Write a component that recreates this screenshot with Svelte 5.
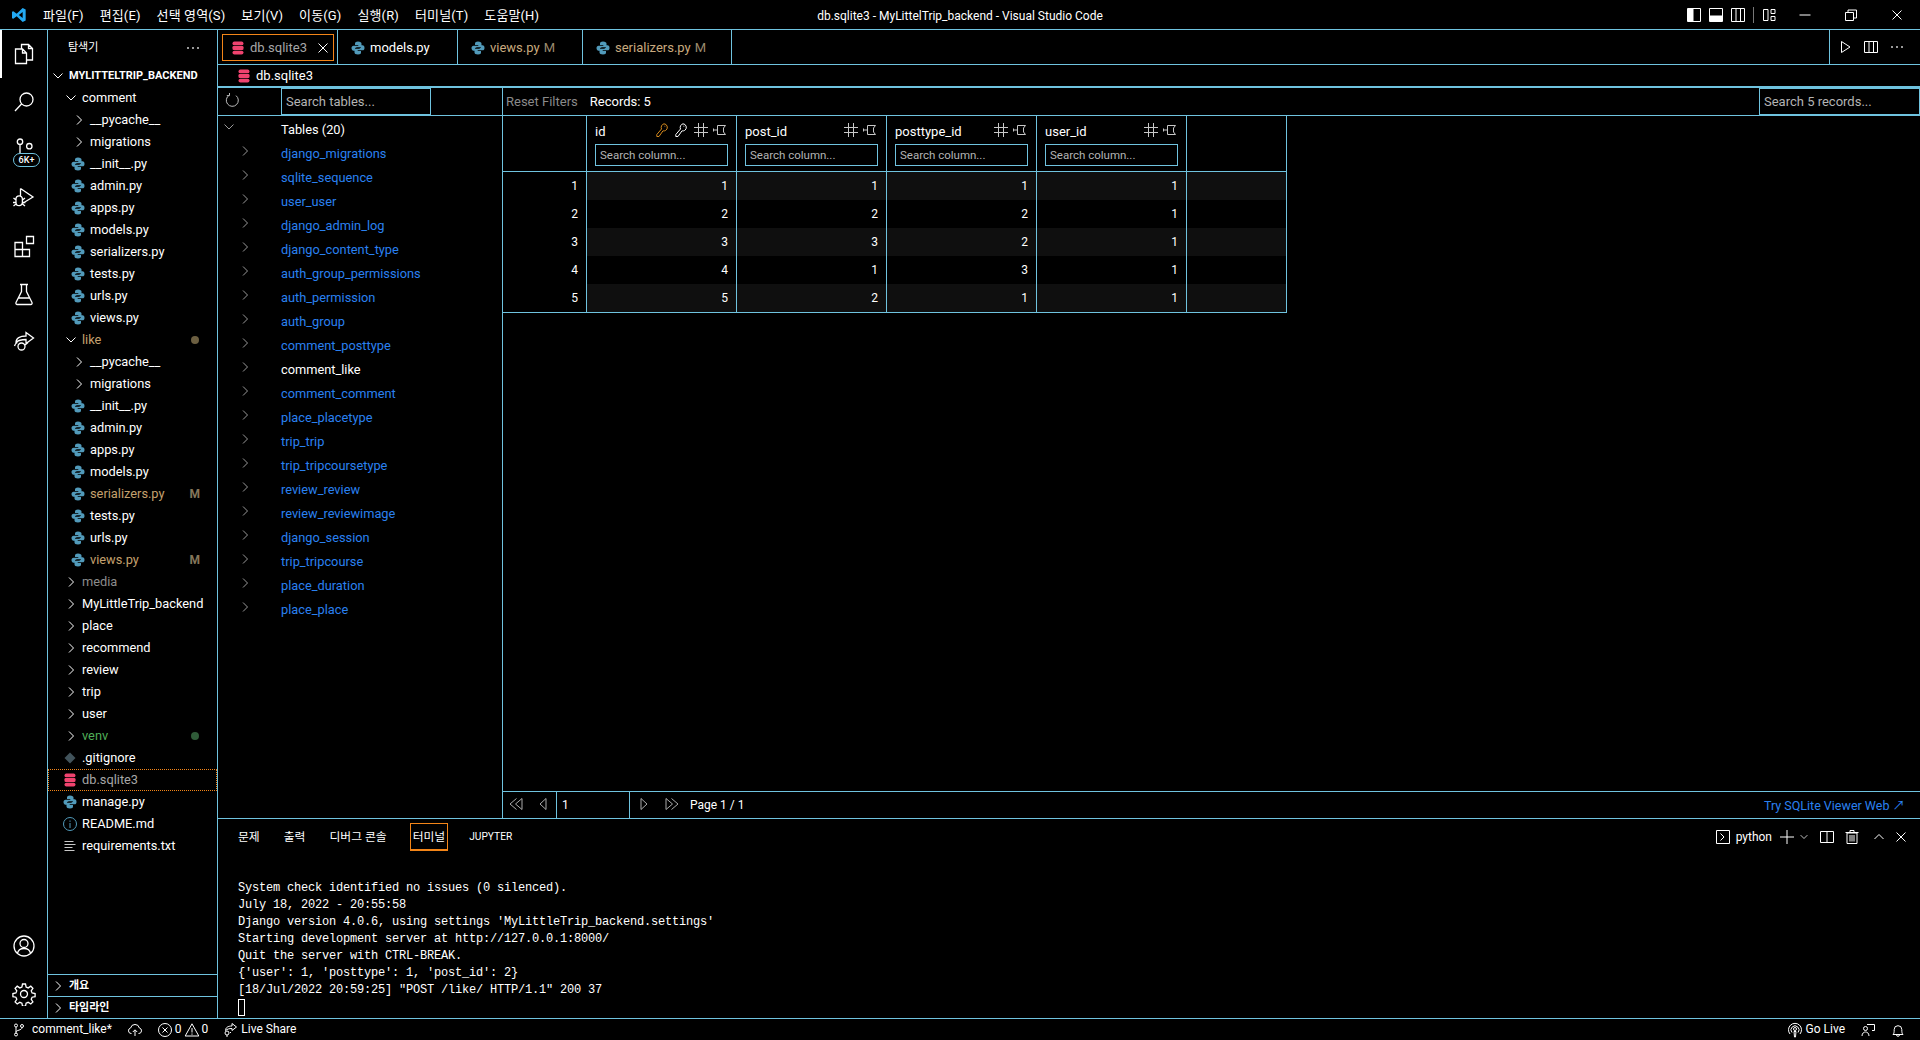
<script>
  const ICONS = {
    chevR: { s: ['M6 3.500 10.500 8 6 12.500'] },
    chevD: { s: ['M3.500 5.500 8 10 12.500 5.500'] },
    chevU: { s: ['M3.500 10 8 5.500 12.500 10'] },
    close: { s: ['M3.500 3.500l9 9M12.500 3.500l-9 9'] },
    dots: { f: ['M2.200 7.200h1.600v1.600H2.200zM7.200 7.200h1.600v1.600H7.200zM12.200 7.200h1.600v1.600h-1.600z'] },
    play: { s: ['M4.500 2.500 13 8l-8.500 5.500z'] },
    split: { s: ['M1.500 2.500h13v11h-13zM6 2.500v11M10.500 2.500v11'] },
    split2: { s: ['M1.500 2.500h13v11h-13zM8 2.500v11'] },
    layL: { s: ['M1.500 1.500h13v13h-13z'], f: ['M2 2h5.500v12H2z'] },
    layB: { s: ['M1.500 1.500h13v13h-13z'], f: ['M2 8.500h12V14H2z'] },
    layR: { s: ['M1.500 1.500h13v13h-13zM6 1.500v13M10.500 1.500v13'] },
    layC: { s: ['M2.500 2.500h4.500v11H2.500zM10 2.500h4v4h-4zM10 9.500h4v4h-4z'] },
    min: { s: ['M2.500 8h11'] },
    restore: { s: ['M2.500 5.500h8v8h-8zM5 5.500V3h8.500v8H10.500'] },
    refresh: { s: ['M5.200 3.200A6 6 0 1 0 12 3.600M5.500 1v2.600H2.800'] },
    first: { s: ['M14 2.500 7.500 8l6.500 5.500zM8.500 2.500 2 8l6.500 5.500'] },
    prev: { s: ['M11 2.500 5 8l6 5.500z'] },
    next: { s: ['M5 2.500 11 8l-6 5.500z'] },
    last: { s: ['M2 2.500 8.500 8 2 13.500zM7.500 2.500 14 8l-6.500 5.500'] },
    key: { s: ['M10 1.800a3.600 3.600 0 0 1 2.200 6.200c-1 1-2.300 1-3.200.8L5 14.500H2.800v-2L7.500 7A3.800 3.800 0 0 1 10 1.800zM10.500 4.200h.8'] },
    hash: { s: ['M5.500 1v14M10.500 1v14M1 5.500h14M1 10.500h14'] },
    pin: { s: ['M5.500 3.500h8l-2 2.500v4l2 2.500h-8zM5.500 8h-4M1.500 6.500v3'] },
    term: { s: ['M1.500 1.500h13v13h-13zM5.500 4.500 9 8l-3.500 3.500'] },
    plus: { s: ['M8 1v14M1 8h14'] },
    trash: { s: ['M3 4h10v10.500H3zM1.500 3.500h13M6 3.500V1.500h4v2M6 6v6.500M8 6v6.500M10 6v6.500'] },
    branch: { s: ['M4 5v7M4 10c0-2 6-1.500 6-4.500M5.500 3.500a1.500 1.500 0 1 1-3 0 1.500 1.500 0 0 1 3 0zM5.500 12.500a1.500 1.500 0 1 1-3 0 1.500 1.500 0 0 1 3 0zM11.500 4a1.500 1.500 0 1 1-3 0 1.500 1.500 0 0 1 3 0z'] },
    sync: { s: ['M4.500 11.500H4a2.800 2.800 0 0 1-.4-5.500 4.500 4.500 0 0 1 8.800 0 2.800 2.800 0 0 1-.4 5.500h-.5M8 14V8M5.800 10 8 7.800 10.200 10'] },
    err: { s: ['M14.500 8a6.500 6.500 0 1 1-13 0 6.500 6.500 0 0 1 13 0zM5.500 5.500l5 5M10.500 5.500l-5 5'] },
    warn: { s: ['M8 1.800 14.800 14H1.200zM8 6v4.500M8 11.500v1.200'] },
    share: { s: ['M3.500 8.500C3.500 5.500 6 4 10 4V1.500L14.500 5 10 8.500V6.500C7 6.500 5.500 7 3.500 8.500zM7 11a2 2 0 1 1-4 0 2 2 0 0 1 4 0zM5 13v2M9 10l-1 1'] },
    golive: { s: ['M11 10.500a4 4 0 1 0-6 0M13 12a6.500 6.500 0 1 0-10 0M9.500 7a1.500 1.500 0 1 1-3 0 1.500 1.500 0 0 1 3 0zM7 9.500h2L8.500 15h-1z'] },
    feedback: { s: ['M7 2.500h7.500v6H12M7.500 6.500a2 2 0 1 1-4 0 2 2 0 0 1 4 0zM2 14c0-3 2-4 3.500-4s3.500 1 3.500 4'] },
    bell: { s: ['M3 12.500c1-1 1.200-2 1.200-5a3.800 3.800 0 0 1 7.600 0c0 3 .2 4 1.200 5zM6.500 12.800a1.500 1.500 0 0 0 3 0'] },
    lines: { s: ['M2.500 3.500h9M2.500 6.500h11M2.500 9.500h8M2.500 12.500h10'] },
    info: { s: ['M14.500 8a6.500 6.500 0 1 1-13 0 6.500 6.500 0 0 1 13 0zM8 7v5M8 4.500v1.300'] },
    files: { s: ['M9.500 6.500V2.500h7l4 4v11.500h-5.500M16.500 2.500v4h4M3.500 7h7l4 4v10.500h-11zM10.500 7v4h4'] },
    search: { s: ['M21 9.500a6.500 6.500 0 1 1-13 0 6.500 6.500 0 0 1 13 0zM9.500 14 3 21'] },
    scm: { s: ['M10.700 3.700a2.700 2.700 0 1 1-5.400 0 2.700 2.700 0 0 1 5.400 0zM20 8.200a2.700 2.700 0 1 1-5.400 0 2.700 2.700 0 0 1 5.400 0zM8 6.400V16'] },
    run: { s: ['M8.500 2.500 21 11 9.500 18M8.500 2.500V10M4 13a3.200 3.200 0 0 1 6.400 0v3.500a3.200 3.200 0 0 1-6.400 0zM1.500 12l2.500 2M13 12l-2.500 2M1.500 20l2.500-2M13 20l-2.500-2M1 16.500h3M10.500 16.500h3'] },
    ext: { s: ['M3 8.500h7.500v14H3zM3 15.500h14.500v7h-7M14.500 2.500h7v7h-7z'] },
    flask: { s: ['M8 2.500h8M9.500 2.500v7L4 20.500c-.4 1 .2 2 1.200 2h13.600c1 0 1.600-1 1.200-2L14.500 9.500v-7M6.500 16h11'] },
    lshare: { s: ['M4 12.500C4 8 8 6 14 6V2.500L21.500 8 14 13.500V9.500C10 9.500 6.500 10 4 12.500zM13 16.500a3.500 3.500 0 1 1-7 0 3.500 3.500 0 0 1 7 0zM2.500 16c.5-2 1.500-3 3-3.500M16 12.500l-3 2.500'] },
    account: { s: ['M22 12a10 10 0 1 1-20 0 10 10 0 0 1 20 0zM16 9.500a4 4 0 1 1-8 0 4 4 0 0 1 8 0zM5.500 19.500C6 16 8.500 14.500 12 14.500s6 1.500 6.500 5'] },
    gear: { s: ['M15.500 12a3.500 3.500 0 1 1-7 0 3.500 3.500 0 0 1 7 0zM10.500 2h3l.6 3 2.100.9 2.600-1.700 2.100 2.100-1.700 2.600.9 2.100 3 .6v3l-3 .6-.9 2.100 1.700 2.600-2.100 2.100-2.600-1.700-2.100.9-.6 3h-3l-.6-3-2.100-.9-2.600 1.700-2.100-2.100 1.700-2.600-.9-2.100-3-.6v-3l3-.6.9-2.100-1.700-2.600 2.100-2.100 2.600 1.700 2.100-.9z'] }
  };

  const menus = ['파일(F)', '편집(E)', '선택 영역(S)', '보기(V)', '이동(G)', '실행(R)', '터미널(T)', '도움말(H)'];
  const sub = ['__init__.py', 'admin.py', 'apps.py', 'models.py', 'serializers.py', 'tests.py', 'urls.py', 'views.py'];
  const pkg = (modified) => [
    { n: '__pycache__', d: 'd2', c: 'chev' },
    { n: 'migrations', d: 'd2', c: 'chev' },
    ...sub.map((n) => ({ n, d: 'f2', c: 'py', tone: modified.includes(n) ? 'mod' : '', mark: modified.includes(n) ? 'M' : '' }))
  ];
  const tree = [
    { n: 'comment', d: 'd1', c: 'open' },
    ...pkg([]),
    { n: 'like', d: 'd1', c: 'open', tone: 'mod', mark: '•' },
    ...pkg(['serializers.py', 'views.py']),
    { n: 'media', d: 'd1', c: 'chev', tone: 'dim' },
    ...['MyLittleTrip_backend', 'place', 'recommend', 'review', 'trip', 'user'].map((n) => ({ n, d: 'd1', c: 'chev' })),
    { n: 'venv', d: 'd1', c: 'chev', tone: 'grn', mark: '•', markTone: 'grn' },
    { n: '.gitignore', d: 'f1', c: 'git' },
    { n: 'db.sqlite3', d: 'f1', c: 'db', tone: 'sel', focus: true },
    { n: 'manage.py', d: 'f1', c: 'py' },
    { n: 'README.md', d: 'f1', c: 'info' },
    { n: 'requirements.txt', d: 'f1', c: 'lines' }
  ];
  const tabs = [
    { n: 'db.sqlite3', c: 'db', w: 'w120', active: true },
    { n: 'models.py', c: 'py', w: 'w120' },
    { n: 'views.py', c: 'py', w: 'w125', mod: true },
    { n: 'serializers.py', c: 'py', w: 'w149', mod: true }
  ];
  const tables = ['django_migrations', 'sqlite_sequence', 'user_user', 'django_admin_log', 'django_content_type', 'auth_group_permissions', 'auth_permission', 'auth_group', 'comment_posttype', 'comment_like', 'comment_comment', 'place_placetype', 'trip_trip', 'trip_tripcoursetype', 'review_review', 'review_reviewimage', 'django_session', 'trip_tripcourse', 'place_duration', 'place_place'];
  const cols = ['id', 'post_id', 'posttype_id', 'user_id'];
  const rows = [[1, 1, 1, 1], [2, 2, 2, 1], [3, 3, 2, 1], [4, 1, 3, 1], [5, 2, 1, 1]];
  const term = [
    'System check identified no issues (0 silenced).',
    'July 18, 2022 - 20:55:58',
    "Django version 4.0.6, using settings 'MyLittleTrip_backend.settings'",
    'Starting development server at http://127.0.0.1:8000/',
    'Quit the server with CTRL-BREAK.',
    "{'user': 1, 'posttype': 1, 'post_id': 2}",
    '[18/Jul/2022 20:59:25] "POST /like/ HTTP/1.1" 200 37'
  ];
  const activityTop = [['files', true], ['search'], ['scm'], ['run'], ['ext'], ['flask'], ['lshare']];
</script>

{#snippet ic(name, cls = '')}
  <svg class="ic {cls}" viewBox="0 0 16 16" aria-hidden="true">
    {#each ICONS[name].f ?? [] as d}<path class="fl" {d} />{/each}
    {#each ICONS[name].s ?? [] as d}<path {d} />{/each}
  </svg>
{/snippet}

{#snippet big(name)}
  <svg class="big" viewBox="0 0 24 24" aria-hidden="true">
    {#each ICONS[name].s as d}<path {d} />{/each}
  </svg>
{/snippet}

{#snippet py()}
  <svg class="file" viewBox="0 0 16 16" aria-hidden="true">
    <path class="pyc" d="M8 1.500c-2.400 0-3 1-3 2v1.600h3.300v.6H3.600C2.200 5.700 1.500 6.700 1.500 8.100s.7 2.600 2 2.600H5V9.200c0-1.100.9-1.900 2-1.900h2.900c.9 0 1.600-.7 1.600-1.600V3.500c0-1-1.200-2-3.500-2z" />
    <path class="pyc" d="M8 14.500c2.400 0 3-1 3-2v-1.600H7.700v-.6h4.700c1.400 0 2.100-1 2.100-2.400s-.7-2.600-2-2.600H11v1.500c0 1.100-.9 1.900-2 1.900H6.100c-.9 0-1.600.7-1.600 1.600v2.200c0 1 1.200 2 3.500 2z" />
  </svg>
{/snippet}

{#snippet db()}
  <svg class="file" viewBox="0 0 16 16" aria-hidden="true">
    <rect class="dbc" x="2.500" y="1.500" width="11" height="3.800" rx="1.900" />
    <rect class="dbc" x="2.500" y="6.100" width="11" height="3.800" rx="1.200" />
    <rect class="dbc" x="2.500" y="10.700" width="11" height="3.800" rx="1.900" />
  </svg>
{/snippet}

{#snippet fileIcon(c)}
  {#if c === 'py'}{@render py()}
  {:else if c === 'db'}{@render db()}
  {:else if c === 'git'}
    <svg class="file" viewBox="0 0 16 16" aria-hidden="true"><path class="gitc" d="M8 2.500 13.500 8 8 13.500 2.500 8z" /></svg>
  {:else if c === 'info'}<span class="infoc">{@render ic('info')}</span>
  {:else if c === 'lines'}<span class="linec">{@render ic('lines')}</span>
  {/if}
{/snippet}

<div class="win">
  <header class="titlebar">
    <div class="tleft">
      <svg class="logo" viewBox="0 0 24 24" aria-hidden="true">
        <path class="lg1" d="M17.500 1.500 22 3.700v16.600l-4.500 2.200L8.500 14l-5 3.800L1.500 16.700v-9.400l2-1.100 5 3.800zM17.500 7.500 11.800 12l5.700 4.500z" />
      </svg>
      <nav class="menu">
        {#each menus as m}<span class="mi">{m}</span>{/each}
      </nav>
    </div>
    <div class="title">db.sqlite3 - MyLittelTrip_backend - Visual Studio Code</div>
    <div class="tright">
      <span class="lay">{@render ic('layL')}</span>
      <span class="lay">{@render ic('layB')}</span>
      <span class="lay">{@render ic('layR')}</span>
      <span class="vsep"></span>
      <span class="lay">{@render ic('layC')}</span>
      <span class="wc">{@render ic('min')}</span>
      <span class="wc">{@render ic('restore')}</span>
      <span class="wc">{@render ic('close')}</span>
    </div>
  </header>

  <div class="main">
    <aside class="activity">
      <div class="agroup">
        {#each activityTop as [name, active]}
          <div class="aitem" class:active>
            {@render big(name)}
            {#if name === 'scm'}<span class="badge">6K+</span>{/if}
          </div>
        {/each}
      </div>
      <div class="agroup">
        <div class="aitem">{@render big('account')}</div>
        <div class="aitem">{@render big('gear')}</div>
      </div>
    </aside>

    <aside class="sidebar">
      <div class="sbhead"><span>탐색기</span><span class="sbdots">{@render ic('dots')}</span></div>
      <div class="row d0 root"><span class="tw">{@render ic('chevD')}</span><span>MYLITTELTRIP_BACKEND</span></div>
      <div class="tree">
        {#each tree as t}
          <div class="row {t.d} {t.tone ?? ''}" class:focus={t.focus}>
            <span class="tw" class:fi={t.d[0] === 'f'}>
              {#if t.c === 'chev'}{@render ic('chevR')}
              {:else if t.c === 'open'}{@render ic('chevD')}
              {:else}{@render fileIcon(t.c)}{/if}
            </span>
            <span class="nm">{t.n}</span>
            {#if t.mark === 'M'}<span class="mark">M</span>
            {:else if t.mark}<span class="dot {t.markTone ?? ''}"></span>{/if}
          </div>
        {/each}
      </div>
      <div class="sbsec"><span class="tw">{@render ic('chevR')}</span><span>개요</span></div>
      <div class="sbsec"><span class="tw">{@render ic('chevR')}</span><span>타임라인</span></div>
    </aside>

    <div class="content">
      <div class="tabbar">
        {#each tabs as t}
          <div class="tab {t.w}" class:active={t.active} class:mod={t.mod}>
            {@render fileIcon(t.c)}
            <span class="tname">{t.n}</span>
            {#if t.mod}<span class="tm">M</span>{/if}
            {#if t.active}<span class="tclose">{@render ic('close')}</span>{/if}
          </div>
        {/each}
        <div class="tabfill"></div>
        <div class="tabacts">
          <span class="ta">{@render ic('play')}</span>
          <span class="ta">{@render ic('split')}</span>
          <span class="ta">{@render ic('dots')}</span>
        </div>
      </div>
      <div class="crumbs">{@render db()}<span>db.sqlite3</span></div>

      <div class="viewer">
        <div class="toolbar">
          <div class="tbl">
            <span class="refresh">{@render ic('refresh')}</span>
            <input class="search" placeholder="Search tables..." />
          </div>
          <div class="tbr">
            <span class="reset">Reset Filters</span>
            <span class="records">Records: 5</span>
            <input class="search recs" placeholder="Search 5 records..." />
          </div>
        </div>
        <div class="vbody">
          <div class="tablelist">
            <div class="tl head"><span class="tlc top">{@render ic('chevD')}</span><span>Tables (20)</span></div>
            {#each tables as t}
              <div class="tl"><span class="tlc sub">{@render ic('chevR')}</span><span class="lnk" class:cur={t === 'comment_like'}>{t}</span></div>
            {/each}
          </div>
          <div class="tpane">
            <div class="twrap">
              <div class="grid">
                <div class="th blank"></div>
                {#each cols as c, i}
                  <div class="th">
                    <div class="throw">
                      <span class="cn">{c}</span>
                      <span class="thi">
                        {#if i === 0}
                          <span class="gold">{@render ic('key')}</span>
                          <span class="wht">{@render ic('key')}</span>
                        {/if}
                        {@render ic('hash')}
                        {@render ic('pin')}
                      </span>
                    </div>
                    <input class="colsearch" placeholder="Search column..." />
                  </div>
                {/each}
                <div class="th blank"></div>
                {#each rows as r, ri}
                  <div class="td idx">{ri + 1}</div>
                  {#each r as v}<div class="td" class:odd={ri % 2 === 0}>{v}</div>{/each}
                  <div class="td" class:odd={ri % 2 === 0}></div>
                {/each}
              </div>
            </div>
            <div class="pager">
              <span class="pb b1">{@render ic('first')}</span>
              <span class="pb b2">{@render ic('prev')}</span>
              <span class="pinput">1</span>
              <span class="pb b3">{@render ic('next')}</span>
              <span class="pb b4">{@render ic('last')}</span>
              <span class="ptext">Page 1 / 1</span>
              <span class="try">Try SQLite Viewer Web ↗</span>
            </div>
          </div>
        </div>
      </div>

      <section class="panel">
        <div class="ptabs">
          <span class="pt p1">문제</span>
          <span class="pt p2">출력</span>
          <span class="pt p3">디버그 콘솔</span>
          <span class="pt p4">터미널</span>
          <span class="pt p5">JUPYTER</span>
          <span class="pfill"></span>
          <span class="pa a1">{@render ic('term')}</span>
          <span class="pyname">python</span>
          <span class="pa a2">{@render ic('plus')}</span>
          <span class="pa a3">{@render ic('chevD', 'tiny')}</span>
          <span class="pa a4">{@render ic('split2')}</span>
          <span class="pa a5">{@render ic('trash')}</span>
          <span class="pa a6">{@render ic('chevU')}</span>
          <span class="pa a7">{@render ic('close')}</span>
        </div>
        <div class="terminal">
          {#each term as l}<div class="tline">{l}</div>{/each}
          <div class="cursor"></div>
        </div>
      </section>
    </div>
  </div>

  <footer class="status">
    <span class="si s1">{@render ic('branch')}<span>comment_like*</span></span>
    <span class="si s2">{@render ic('sync')}</span>
    <span class="si s3">{@render ic('err')}<span>0</span>{@render ic('warn')}<span>0</span></span>
    <span class="si s4">{@render ic('share')}<span>Live Share</span></span>
    <span class="sfill"></span>
    <span class="si s5">{@render ic('golive')}<span>Go Live</span></span>
    <span class="si s6">{@render ic('feedback')}</span>
    <span class="si s7">{@render ic('bell')}</span>
  </footer>
</div>

<style>
  :global(body) { margin: 0; background: #000; }
  .win {
    --ln: #6fc3df;
    width: 1920px; height: 1040px; background: #000; color: #fff; overflow: hidden;
    display: flex; flex-direction: column;
    font: 12.800px/1.2 Roboto, "Noto Sans CJK KR", sans-serif;
  }
  .ic { width: 16px; height: 16px; display: block; fill: none; stroke: currentColor; stroke-width: 1; flex: none; }
  .ic .fl { fill: currentColor; stroke: none; }
  .big { width: 24px; height: 24px; display: block; fill: none; stroke: #fff; stroke-width: 1.300; }
  .file { width: 16px; height: 16px; display: block; flex: none; }
  .pyc { fill: #519aba; }
  .dbc { fill: #f0436f; }
  .gitc { fill: #41535b; }
  .infoc { color: #519aba; display: block; }
  .linec { color: #c8c8c8; display: block; }

  .titlebar { height: 29px; border-bottom: 1px solid var(--ln); display: grid; grid-template-columns: 1fr auto 1fr; align-items: center; flex: none; }
  .tleft { display: flex; align-items: center; height: 100%; }
  .logo { width: 16px; height: 16px; margin: 0 8px 0 11px; }
  .lg1 { fill: #23a9f2; fill-rule: evenodd; }
  .menu { display: flex; font-size: 13px; letter-spacing: 0.12px; padding-top: 3px; }
  .mi { padding: 0 8px; white-space: nowrap; }
  .title { font-size: 12px; white-space: nowrap; padding-top: 3px; }
  .tright { display: flex; align-items: center; justify-content: flex-end; height: 100%; }
  .lay { width: 22px; display: flex; justify-content: center; }
  .vsep { width: 1px; height: 16px; background: #777; margin: 0 4px; }
  .wc { width: 46px; display: flex; justify-content: center; }
  .lay:nth-child(5) { margin-right: 2px; }

  .main { flex: 1; display: flex; min-height: 0; }
  .activity { width: 47px; border-right: 1px solid var(--ln); display: flex; flex-direction: column; justify-content: space-between; flex: none; }
  .aitem { height: 48px; display: flex; align-items: center; justify-content: center; position: relative; }
  .aitem.active::before { content: ""; position: absolute; left: 0; top: 0; bottom: 0; width: 2px; background: #fff; }
  .badge { position: absolute; left: 13px; top: 27px; width: 27px; height: 14px; box-sizing: border-box; border: 1px solid var(--ln); border-radius: 7px; background: #000; font-size: 9px; font-weight: 500; line-height: 12px; text-align: center; }

  .sidebar { width: 169px; border-right: 1px solid var(--ln); display: flex; flex-direction: column; flex: none; }
  .sbhead { height: 35px; display: flex; align-items: center; justify-content: space-between; padding: 0 16px 0 20px; font-size: 11px; flex: none; }
  .tree { flex: 1; min-height: 0; }
  .row { height: 22px; display: flex; align-items: center; box-sizing: border-box; position: relative; white-space: nowrap; }
  .tw { width: 16px; height: 16px; flex: none; margin-right: 3px; }
  .tw.fi { margin-right: 4px; }
  .d0 { padding-left: 2px; }
  .d1 { padding-left: 15px; }
  .d2 { padding-left: 23px; }
  .f1 { padding-left: 14px; }
  .f2 { padding-left: 22px; }
  .root { font-size: 11px; font-weight: 700; }
  .mod .nm { color: #c4a06e; }
  .dim .nm { color: #8c8c8c; }
  .grn .nm { color: #4fae58; }
  .sel .nm { color: #a6a6a6; }
  .focus { outline: 1px dotted #f38518; outline-offset: -1px; }
  .mark { position: absolute; right: 17px; font-size: 12px; font-weight: 700; color: #85765a; }
  .dot { position: absolute; right: 18px; width: 8px; height: 8px; border-radius: 50%; background: #6c5f41; }
  .dot.grn { background: #2f5b38; }
  .sbsec { height: 21px; border-top: 1px solid var(--ln); display: flex; align-items: center; padding-left: 2px; font-size: 11px; font-weight: 700; flex: none; }

  .content { flex: 1; min-width: 0; display: flex; flex-direction: column; }
  .tabbar { height: 34px; border-bottom: 1px solid var(--ln); display: flex; flex: none; }
  .tab { display: flex; align-items: center; box-sizing: border-box; border-right: 1px solid var(--ln); padding-left: 12px; padding-top: 2px; position: relative; flex: none; font-size: 13px; }
  .w120 { width: 120px; } .w125 { width: 125px; } .w149 { width: 149px; }
  .tname { margin-left: 4px; }
  .tab.active .tname { color: #a6a6a6; }
  .tab.mod .tname { color: #c9aa7e; }
  .tm { margin-left: 4px; color: #9b8a6d; }
  .tab.active::after { content: ""; position: absolute; left: 4px; right: 3px; top: 4px; bottom: 3px; border: 1px solid #f38518; }
  .tclose { position: absolute; left: 97px; top: 10px; }
  .tabfill { flex: 1; }
  .tabacts { width: 91px; border-left: 1px solid var(--ln); display: flex; align-items: center; padding-left: 2px; box-sizing: border-box; }
  .ta { width: 26px; display: flex; justify-content: center; }
  .crumbs { height: 21px; display: flex; align-items: center; gap: 2px; padding-left: 18px; font-size: 13px; flex: none; }
  .crumbs > span { margin-left: 2px; }

  .viewer { flex: 1; min-height: 0; border-top: 2px solid var(--ln); display: flex; flex-direction: column; border-bottom: 1px solid var(--ln); }
  .toolbar { height: 27px; border-bottom: 1px solid var(--ln); display: flex; flex: none; box-sizing: content-box; }
  .tbl { width: 284px; border-right: 1px solid var(--ln); display: flex; align-items: stretch; flex: none; }
  .refresh { width: 63px; box-sizing: border-box; padding: 4px 0 0 6px; color: #bbb; }
  .search { width: 150px; height: 27px; box-sizing: border-box; background: #000; border: 1px solid var(--ln); color: #fff; font: 13px Roboto, sans-serif; padding: 0 4px; outline: none; border-radius: 0; }
  .search::placeholder, .colsearch::placeholder { color: #b4b4b4; opacity: 1; }
  .tbr { flex: 1; display: flex; align-items: center; padding-left: 3px; font-size: 13px; }
  .reset { color: #8a8a8a; }
  .records { margin-left: 12px; }
  .search.recs { width: 161px; margin-left: auto; }

  .vbody { flex: 1; min-height: 0; display: flex; }
  .tablelist { width: 284px; border-right: 1px solid var(--ln); padding-top: 2px; flex: none; }
  .tl { height: 24px; display: flex; align-items: center; position: relative; padding-left: 63px; white-space: nowrap; }
  .tlc { position: absolute; top: 1px; color: #9a9a9a; }
  .tlc.top { left: 3px; }
  .tlc.sub { left: 19px; }
  .lnk { color: #2a80f0; }
  .lnk.cur { color: #fff; }

  .tpane { flex: 1; min-width: 0; display: flex; flex-direction: column; }
  .twrap { flex: 1; min-height: 0; }
  .grid { display: grid; grid-template-columns: 84px repeat(4, 150px) 100px; grid-template-rows: 56px; grid-auto-rows: 28px; width: max-content; border-bottom: 1px solid var(--ln); }
  .th { height: 56px; box-sizing: border-box; border-right: 1px solid var(--ln); border-bottom: 1px solid var(--ln); padding: 5px 8px 0 8px; }
  .throw { height: 23px; display: flex; align-items: center; justify-content: space-between; }
  .cn { margin-top: -1px; font-size: 13px; }
  .thi { display: flex; gap: 3.500px; margin-top: -6px; color: #c8c8c8; }
  .gold { color: #d58a1e; }
  .wht { color: #fff; }
  .colsearch { display: block; width: 133px; height: 22px; box-sizing: border-box; background: #000; border: 1px solid var(--ln); border-radius: 0; color: #fff; font: 11.500px Roboto, sans-serif; padding: 0 4px; outline: none; }
  .td { border-right: 1px solid var(--ln); display: flex; align-items: center; justify-content: flex-end; padding-right: 8px; font-size: 12px; }
  .td.odd { background: #0f0f0f; }
  .td.idx { background: #000; }
  .pager { height: 26px; border-top: 1px solid var(--ln); display: flex; align-items: center; position: relative; flex: none; }
  .pb { color: #aaa; margin-top: -2px; }
  .b1 { margin-left: 5px; }
  .b2 { margin-left: 11px; }
  .b3 { margin-left: 6px; }
  .b4 { margin-left: 12px; }
  .pinput { width: 74px; height: 26px; box-sizing: border-box; border: solid var(--ln); border-width: 0 1px; margin-left: 5px; padding: 6px 0 0 5px; font-size: 12px; }
  .ptext { margin-left: 10px; font-size: 12px; }
  .try { margin-left: auto; margin-right: 15px; color: #2a80f0; font-size: 12.500px; }

  .panel { height: 199px; display: flex; flex-direction: column; flex: none; }
  .ptabs { height: 36px; display: flex; align-items: center; flex: none; position: relative; font-size: 11.800px; }
  .pt { white-space: nowrap; }
  .p1 { margin-left: 20px; }
  .p2 { margin-left: 24px; }
  .p3 { margin-left: 24px; }
  .p4 { margin-left: 23px; height: 28px; line-height: 26px; box-sizing: border-box; padding: 0 2px; border: 1px solid #f38518; border-bottom-width: 2px; }
  .p5 { margin-left: 21px; font-size: 10.200px; }
  .pfill { flex: 1; }
  .pa { display: block; }
  .a1 { margin-right: 5px; }
  .pyname { font-size: 12px; margin-right: 7px; }
  .a3 { margin-left: 3px; }
  .tiny { width: 12px; height: 12px; }
  .a4 { margin-left: 9px; }
  .a5 { margin-left: 9px; }
  .a6 { margin-left: 11px; }
  .a7 { margin-left: 6px; margin-right: 11px; }
  .terminal { padding: 25px 0 0 20px; font: 12px/17px "Liberation Mono", monospace; letter-spacing: -0.2px; }
  .tline { height: 17px; white-space: pre; }
  .cursor { width: 7px; height: 17px; box-sizing: border-box; border: 1px solid #fff; }

  .status { height: 21px; border-top: 1px solid var(--ln); display: flex; align-items: center; flex: none; font-size: 12px; }
  .si { display: flex; align-items: center; gap: 4px; }
  .s1 { margin-left: 12px; }
  .s2 { margin-left: 15px; }
  .s3 { margin-left: 14px; gap: 2px; }
  .s4 { margin-left: 14px; gap: 3px; }
  .sfill { flex: 1; }
  .s5 { gap: 3px; }
  .s6 { margin-left: 15px; }
  .s7 { margin-left: 14px; margin-right: 14px; }
</style>
